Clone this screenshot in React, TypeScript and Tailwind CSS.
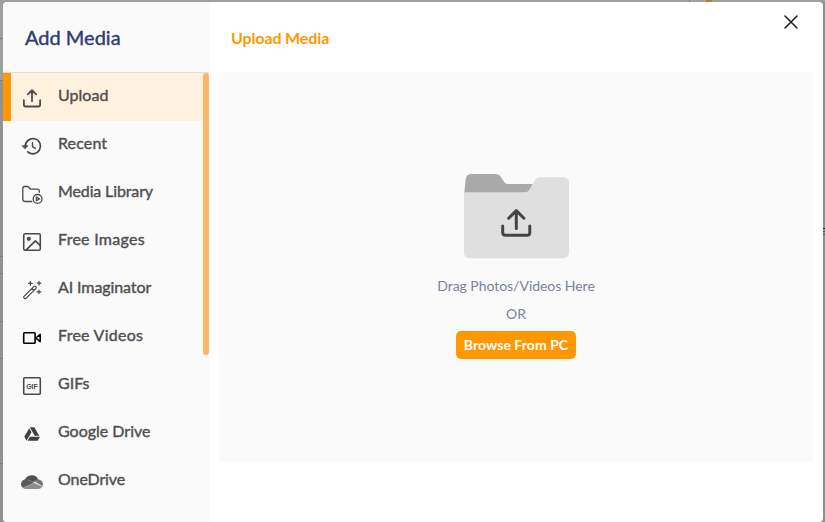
import type { ReactNode } from "react";

const stroke = {
  fill: "none",
  stroke: "#4a4a4a",
  strokeWidth: 1.8,
  strokeLinecap: "round" as const,
  strokeLinejoin: "round" as const,
};

function Glyph({ children }: { children: ReactNode }) {
  return (
    <svg viewBox="0 0 24 24" className="mt-0.5 size-6 shrink-0" {...stroke}>
      {children}
    </svg>
  );
}

const items: { label: string; tracking: string; icon: ReactNode }[] = [
  {
    label: "Upload",
    tracking: "tracking-[0.02px]",
    icon: (
      <Glyph>
        <path d="M12 15.2V4.6M7.8 8.4 12 4.2l4.2 4.2M3.9 14.2v4.6q0 1.7 1.7 1.7h12.8q1.7 0 1.7-1.7v-4.6" />
      </Glyph>
    ),
  },
  {
    label: "Recent",
    tracking: "tracking-[0.12px]",
    icon: (
      <Glyph>
        <path d="M5.3 12.3a7.6 7.6 0 1 1 2.5 5.5" strokeWidth="1.7" />
        <path d="M2.6 11.8h5.2l-2.6 2.8z" fill="#4a4a4a" strokeWidth="0.9" />
        <path d="M12.5 8.5v4.2l2.8 1.7" strokeWidth="1.4" />
      </Glyph>
    ),
  },
  {
    label: "Media Library",
    tracking: "tracking-[-0.13px]",
    icon: (
      <Glyph>
        <g strokeWidth="1.3">
          <path d="M11.7 19.5H5.5q-2.7 0-2.7-2.6V6.4Q2.8 4.5 4.6 4.5h2.7q.9 0 1.4.7l1 1.3q.5.6 1.4.6h6q2.2 0 2.2 2v1.2" />
          <circle cx="17.6" cy="16.9" r="4.4" />
          <path d="M16.4 15v3.8l3-1.9z" />
        </g>
      </Glyph>
    ),
  },
  {
    label: "Free Images",
    tracking: "tracking-[0.27px]",
    icon: (
      <Glyph>
        <rect x="3.7" y="3.7" width="16.6" height="16.6" rx="1.5" strokeWidth="1.6" />
        <circle cx="8.8" cy="8.8" r="2.1" fill="#4a4a4a" stroke="none" />
        <path d="m6.2 19.8 9.2-9 4.5 4.4" strokeWidth="1.7" />
      </Glyph>
    ),
  },
  {
    label: "AI Imaginator",
    tracking: "tracking-[-0.1px]",
    icon: (
      <Glyph>
        <g strokeWidth="1.25">
          <path d="M4 18.4 14 8.4q.8-.7 1.5 0l.5.5q.7.8 0 1.5L6 20.4q-.8.7-1.5 0l-.5-.5q-.7-.8 0-1.5zM12 10.4l2 2" />
          <path d="M10.4 3.6v3.6M8.6 5.4h3.6M19 3.4V7M17.2 5.2h3.6M19 12v3.6M17.2 13.8h3.6" />
        </g>
      </Glyph>
    ),
  },
  {
    label: "Free Videos",
    tracking: "tracking-[0.27px]",
    icon: (
      <Glyph>
        <g stroke="#000" strokeWidth="1.6">
          <rect x="3.7" y="6.8" width="11.4" height="10.4" rx="0.8" />
          <path d="m15.8 12 4.4-3.6v7.2z" />
        </g>
      </Glyph>
    ),
  },
  {
    label: "GIFs",
    tracking: "tracking-[0.02px]",
    icon: (
      <Glyph>
        <rect x="3.7" y="3.7" width="16.6" height="16.6" rx="1" strokeWidth="1.6" />
        <text
          x="12"
          y="14.5"
          textAnchor="middle"
          textLength="11.6"
          className="font-['Liberation_Sans',sans-serif] text-[7px] font-bold"
          fill="#4a4a4a"
          stroke="none"
        >
          GIF
        </text>
      </Glyph>
    ),
  },
  {
    label: "Google Drive",
    tracking: "tracking-[0px]",
    icon: (
      <Glyph>
        <g fill="#404040" stroke="none">
          <path d="M9.8 5.2h4.5l5 8.5h-4.6z" />
          <path d="m9.2 6.2 2.3 4-5 8.5-2.2-4z" />
          <path d="M9.9 14.8H20l-2.2 4H7.6z" />
        </g>
      </Glyph>
    ),
  },
  {
    label: "OneDrive",
    tracking: "tracking-[-0.1px]",
    icon: (
      <Glyph>
        <g stroke="none">
          <path d="M5 10a7 6.6 0 0 1 13.2-.6l-3.4 1.8-5 3z" fill="#505050" />
          <path d="M1 14.2a5 5 0 0 1 7-4.6l6.5 3.5-11 5A4.5 4.5 0 0 1 1 14.2z" fill="#5b5b5b" />
          <path d="m13.8 11 3-1.5c3.2-.6 6 1.5 6.2 4.8l-.4 2z" fill="#747474" />
          <path d="m3 18 10.5-5.2 9 3.8q-1.2 2.2-4 2.3H6.2Q4.3 18.9 3 18z" fill="#8c8c8c" />
          <path d="m3 18 13.8-6.4M8.4 9.8l14 6.8" stroke="#c5c5c5" strokeWidth="0.4" />
        </g>
      </Glyph>
    ),
  },
];

function Sidebar() {
  return (
    <aside className="flex w-[206px] shrink-0 flex-col bg-[#fafafa]">
      <header className="h-[71px] border-b border-[#dedede] pt-[21px] pl-[22px]">
        <h1 className="text-[20px] leading-7 text-[#303b73] [-webkit-text-stroke:0.4px]">
          Add Media
        </h1>
      </header>
      <div className="flex items-start">
        <nav className="w-[200px]">
          {items.map((item, index) => (
            <a
              key={item.label}
              className={`flex h-12 items-center ${
                index === 0 ? "border-l-8 border-[#ff9800] bg-[#fff1de] pl-[9px]" : "pl-[17px]"
              }`}
            >
              {item.icon}
              <span
                className={`-mt-1 ml-[14px] whitespace-nowrap text-[16px] leading-6 text-[#505050] [-webkit-text-stroke:0.4px] ${item.tracking}`}
              >
                {item.label}
              </span>
            </a>
          ))}
        </nav>
        <div className="h-[282px] w-1.5 rounded-full bg-[#fbb768]" />
      </div>
    </aside>
  );
}

function FolderArt() {
  return (
    <svg viewBox="0 0 106 85" className="ml-0.5 h-[85px] w-[106px]">
      <path
        d="M0 22 1.5 6Q2 0 7 0h24q4 0 6 3.2l3.4 5q1.3 1.9 4 1.9H75v12z"
        fill="#a9a9a9"
      />
      <path
        d="M0 18.2h61q3 0 5-3.5l4.7-8.5Q72.7 3.2 76 3.2h23q6 0 6 6v69q0 6-6 6H6q-6 0-6-6z"
        fill="#dfdfdf"
      />
      <path
        d="M52.3 54.5V37M44.7 44.2l7.6-7.6 7.6 7.6M38.7 52v6.5q0 2.7 2.7 2.7h21.7q2.7 0 2.7-2.7V52"
        fill="none"
        stroke="#444"
        strokeWidth="3"
        strokeLinecap="round"
        strokeLinejoin="round"
      />
    </svg>
  );
}

function Backdrop() {
  return (
    <svg viewBox="0 0 825 522" className="absolute inset-0 h-full w-full" shapeRendering="crispEdges">
      <rect width="825" height="2" fill="#a0a0a0" />
      <rect width="3" height="80" fill="#a0a0a0" />
      <path
        d="M0 38.5h3M0 80.5h3M0 256.5h3M0 273.5h3M0 321.5h3M0 358.5h3M0 463.5h3M689.5 0v2"
        stroke="#7c7c7c"
      />
      <rect x="706" width="6" height="2" fill="#b87a35" />
      <rect x="823" y="2" width="2" height="520" fill="#8f8f8f" />
      <path d="M823 228.5h2" stroke="#222" />
      <path d="M823 231.5h2M823 234.5h2" stroke="#555" />
    </svg>
  );
}

export default function App() {
  return (
    <div className="relative flex h-[522px] w-[825px] overflow-hidden bg-[#929292] pt-0.5 pr-0.5 pl-[3px] font-['Lato',sans-serif]">
      <Backdrop />
      <div className="relative flex w-[820px] overflow-hidden rounded-[4px] bg-white">
        <Sidebar />
        <main className="flex flex-1 flex-col px-2.5">
          <header className="flex h-[70px] justify-between">
            <h2 className="mt-6 ml-3 text-[16px] leading-6 font-bold tracking-[-0.12px] text-[#ff9800]">
              Upload Media
            </h2>
            <button aria-label="Close" className="mt-[13px] mr-[15px] size-[14px]">
              <svg viewBox="0 0 14 14" className="size-[14px]">
                <path d="m1 1 12 12M13 1 1 13" stroke="#222" strokeWidth="1.6" strokeLinecap="round" />
              </svg>
            </button>
          </header>
          <section className="flex h-[390px] w-[594px] flex-col items-center bg-[#fafafa] pt-[102px]">
            <FolderArt />
            <p className="mt-[15px] text-[14px] leading-6 tracking-[-0.04px] text-[#7b829b]">
              Drag Photos/Videos Here
            </p>
            <p className="mt-1 text-[14px] leading-6 text-[#7b829b]">OR</p>
            <button className="mt-[5px] h-7 w-[120px] rounded-[5px] bg-[#ff9800] pb-0.5 text-[14px] font-bold tracking-[0.05px] whitespace-nowrap text-white">
              Browse From PC
            </button>
          </section>
        </main>
      </div>
    </div>
  );
}
